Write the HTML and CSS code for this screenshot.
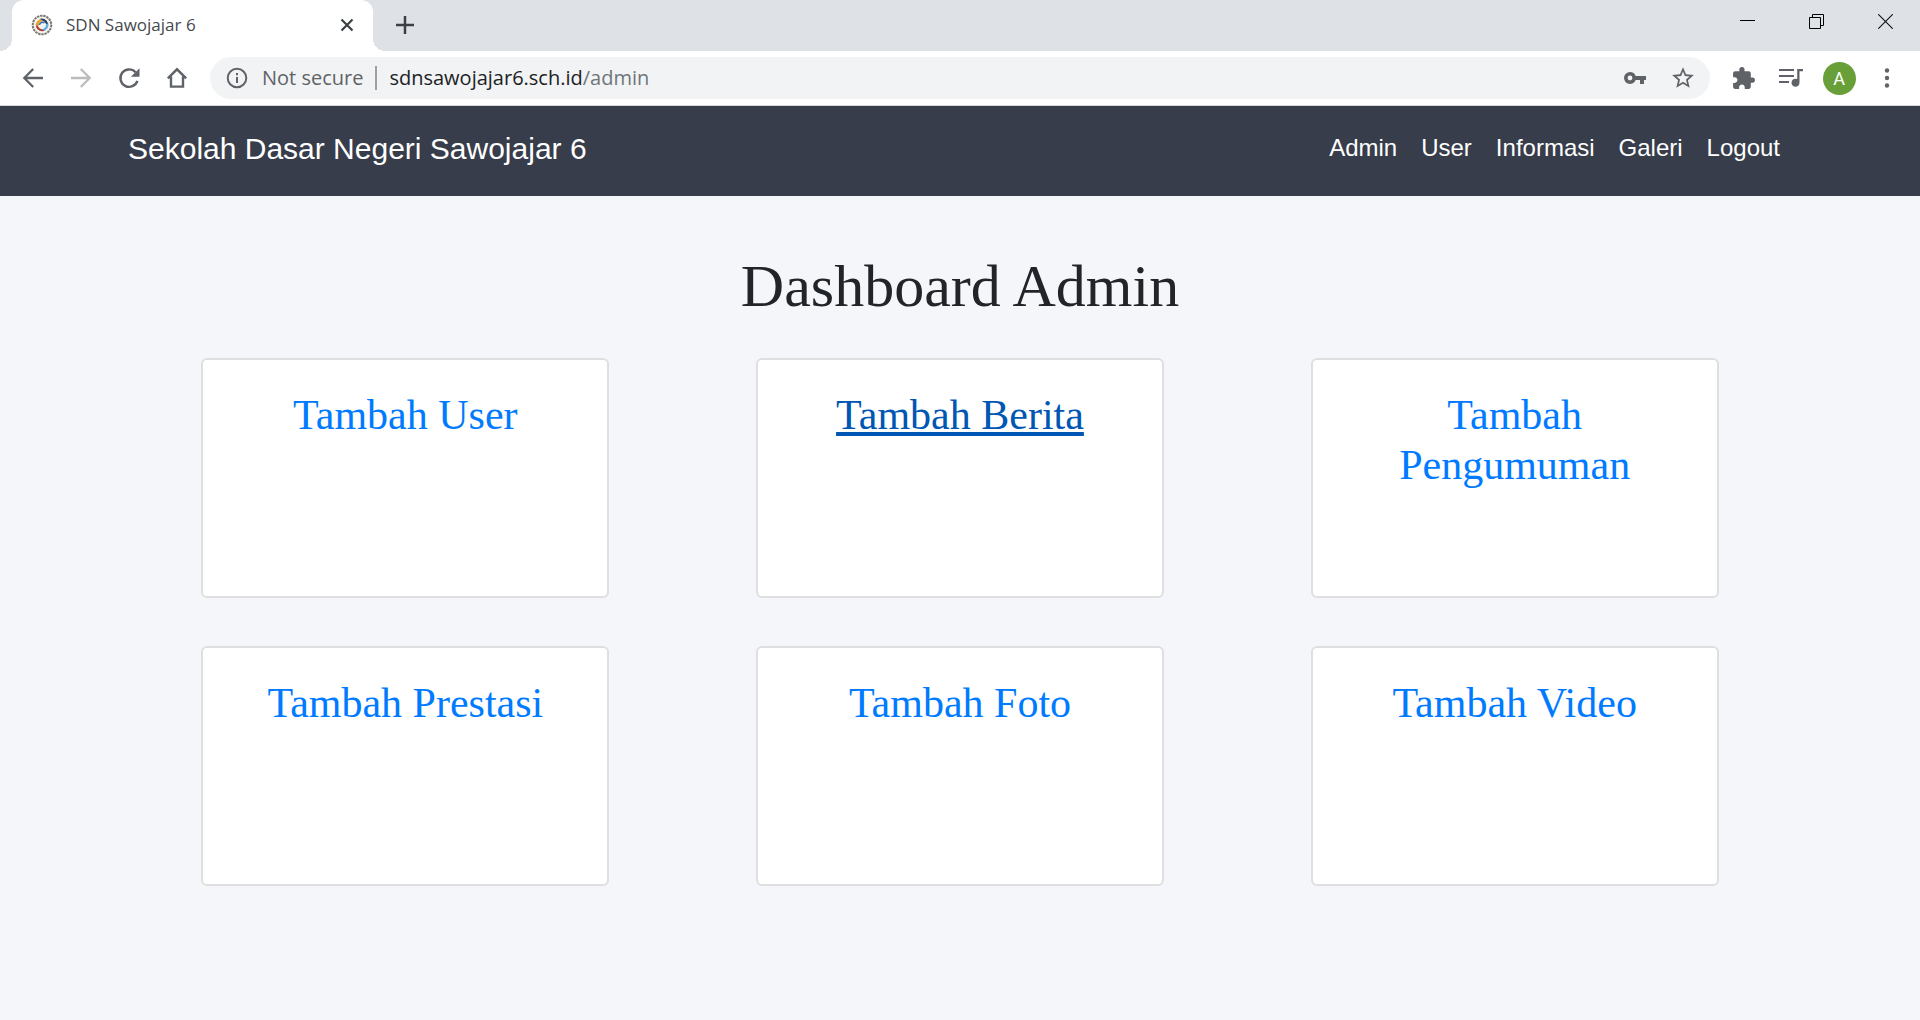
FILE: index.html
```html
<!DOCTYPE html>
<html lang="id">
<head>
<meta charset="utf-8">
<meta name="viewport" content="width=device-width, initial-scale=1">
<title>SDN Sawojajar 6</title>
<link rel="stylesheet" href="styles.css">
</head>
<body>
<div class="tabstrip">
  <div class="tab">
    <svg class="favicon" viewBox="0 0 22 22" width="22" height="22" aria-hidden="true">
      <circle cx="11" cy="11" r="9.3" fill="#f4f3ee" stroke="#77776f" stroke-width="2" stroke-dasharray="2.4 .8"/>
      <path d="M4.500 11.500A6.500 6.500 0 0 1 11 5l3 2.500c-4-1-6.500 1-6 4z" fill="#eca32c"/>
      <path d="M8.500 5A6.500 6.500 0 0 1 17 9.500l-1.500 3c0-4-3-6-7-7.500z" fill="#263c63"/>
      <path d="M17.500 9.500A6.500 6.500 0 0 1 12 17l-3-2c4 .5 6.500-2 6-5z" fill="#62aee0"/>
      <path d="M14 16.500A6.500 6.500 0 0 1 5 13l1-3c1 4 4 5.500 8 6.500z" fill="#b9382c"/>
      <path d="M8.500 11a3 3 0 0 1 5-2" fill="none" stroke="#2c7ab8" stroke-width="1.500"/>
    </svg>
    <span class="tab-title">SDN Sawojajar 6</span>
    <button class="tab-close" type="button" aria-label="Close tab">
      <svg viewBox="0 0 18 18" width="18" height="18"><path d="M3.500 3.500l11 11M14.500 3.500l-11 11" stroke="#3c4043" stroke-width="2.200"/></svg>
    </button>
  </div>
  <button class="new-tab" type="button" aria-label="New tab">
    <svg viewBox="0 0 20 20" width="20" height="20"><path d="M10 1v18M1 10h18" stroke="#3c4043" stroke-width="2.500"/></svg>
  </button>
  <div class="window-controls">
    <button type="button" aria-label="Minimize"><svg viewBox="0 0 15 15" width="15" height="15"><path d="M0 6.500h15" stroke="#000"/></svg></button>
    <button type="button" aria-label="Restore"><svg viewBox="0 0 15 15" width="15" height="15"><path d="M.5 3.500h11v11H.5zM3.500 3.500v-3h11v11h-3" fill="none" stroke="#000"/></svg></button>
    <button type="button" aria-label="Close"><svg viewBox="0 0 15 15" width="15" height="15"><path d="M.3 .3l14.400 14.400M14.700 .3L.3 14.700" stroke="#111" stroke-width="1.100"/></svg></button>
  </div>
</div>

<div class="toolbar">
  <button class="tool" type="button" aria-label="Back">
    <svg viewBox="0 0 30 30" width="30" height="30"><path d="M25 15H6.500M15.200 6L6.300 15l8.900 9" fill="none" stroke="#5f6368" stroke-width="2.300"/></svg>
  </button>
  <button class="tool" type="button" aria-label="Forward">
    <svg viewBox="0 0 30 30" width="30" height="30"><path d="M5 15h18.500M14.800 6l8.900 9-8.900 9" fill="none" stroke="#babcbe" stroke-width="2.300"/></svg>
  </button>
  <button class="tool" type="button" aria-label="Reload">
    <svg viewBox="0 0 30 30" width="30" height="30"><path d="M23.400 17.800A8.700 8.700 0 1 1 21.500 9.200" fill="none" stroke="#5f6368" stroke-width="2.400"/><path d="M25.500 5.200v8.600h-8.600z" fill="#5f6368"/></svg>
  </button>
  <button class="tool" type="button" aria-label="Home">
    <svg viewBox="0 0 30 30" width="30" height="30"><path d="M5.800 15.300L15 6.300l9.200 9M9 13.500v10.100h12V13.500" fill="none" stroke="#5f6368" stroke-width="2.400"/></svg>
  </button>
  <div class="omnibox">
    <svg viewBox="0 0 22 22" width="22" height="22" aria-hidden="true"><circle cx="11" cy="11" r="9.300" fill="none" stroke="#5f6368" stroke-width="2"/><path d="M10 10h2v6h-2zM10 6h2v2.200h-2z" fill="#5f6368"/></svg>
    <span class="security">Not secure</span>
    <div class="url" role="textbox" aria-label="Address" contenteditable="true" spellcheck="false">sdnsawojajar6.sch.id<span class="url-path">/admin</span></div>
    <button class="tool" type="button" aria-label="Saved passwords">
      <svg viewBox="0 0 24 24" width="24" height="24"><path d="M12.650 10A6 6 0 0 0 7 6a6 6 0 1 0 5.650 8H17v4h4v-4h2v-4zM7 14.400a2.400 2.400 0 1 1 0-4.800 2.400 2.400 0 0 1 0 4.800z" fill="#5f6368"/></svg>
    </button>
    <button class="tool" type="button" aria-label="Bookmark this page">
      <svg viewBox="0 0 24 24" width="26" height="26"><path d="M22 9.240l-7.190-.62L12 2 9.190 8.630 2 9.240l5.460 4.730L5.820 21 12 17.270 18.180 21l-1.630-7.030L22 9.240zM12 15.400l-3.760 2.270 1-4.280-3.320-2.880 4.380-.38L12 6.100l1.710 4.040 4.380.38-3.320 2.880 1 4.280L12 15.400z" fill="#5f6368"/></svg>
    </button>
  </div>
  <button class="tool" type="button" aria-label="Extensions">
    <svg viewBox="0 0 24 24" width="25" height="25"><path d="M20.500 11H19V7c0-1.100-.9-2-2-2h-4V3.500a2.500 2.500 0 0 0-5 0V5H4c-1.100 0-1.990.9-1.990 2v3.800H3.500c1.490 0 2.700 1.210 2.700 2.700s-1.210 2.700-2.700 2.700H2V20c0 1.100.9 2 2 2h3.800v-1.500c0-1.490 1.210-2.700 2.700-2.700s2.700 1.210 2.700 2.700V22H17c1.100 0 2-.9 2-2v-4h1.500a2.500 2.500 0 0 0 0-5z" fill="#5f6368"/></svg>
  </button>
  <button class="tool" type="button" aria-label="Media controls">
    <svg viewBox="0 0 26 22" width="26" height="22"><path d="M1 3h15M1 9h15M1 15h10" stroke="#5f6368" stroke-width="2.200"/><path d="M25 1.900v2.300h-3.500v11.300a4 4 0 1 1-2.300-3.400V1.900z" fill="#5f6368"/></svg>
  </button>
  <button class="tool" type="button" aria-label="Account"><span class="avatar">A</span></button>
  <button class="tool" type="button" aria-label="Menu">
    <svg viewBox="0 0 24 24" width="24" height="24"><g fill="#5f6368"><circle cx="12" cy="4.500" r="2.200"/><circle cx="12" cy="12" r="2.200"/><circle cx="12" cy="19.500" r="2.200"/></g></svg>
  </button>
</div>

<nav class="navbar">
  <div class="container navbar-inner">
    <a class="brand" href="#">Sekolah Dasar Negeri Sawojajar 6</a>
    <ul class="nav-links">
      <li><a href="#">Admin</a></li>
      <li><a href="#">User</a></li>
      <li><a href="#">Informasi</a></li>
      <li><a href="#">Galeri</a></li>
      <li><a href="#">Logout</a></li>
    </ul>
  </div>
</nav>

<main class="container">
  <h1 class="page-title">Dashboard Admin</h1>
  <div class="cards">
    <div class="card"><h2><a href="#">Tambah User</a></h2></div>
    <div class="card"><h2><a class="active" href="#">Tambah Berita</a></h2></div>
    <div class="card"><h2><a href="#">Tambah Pengumuman</a></h2></div>
    <div class="card"><h2><a href="#">Tambah Prestasi</a></h2></div>
    <div class="card"><h2><a href="#">Tambah Foto</a></h2></div>
    <div class="card"><h2><a href="#">Tambah Video</a></h2></div>
  </div>
</main>
</body>
</html>
```

FILE: styles.css
```css
* {
  box-sizing: border-box;
}

body {
  margin: 0;
  min-height: 100vh;
  background: #f5f6fa;
  color: #212529;
  font-family: "Liberation Serif", "Times New Roman", serif;
}

button {
  display: flex;
  align-items: center;
  justify-content: center;
  flex: none;
  padding: 0;
  border: 0;
  background: none;
}

svg {
  display: block;
  flex: none;
}

/* Browser frame */
.tabstrip,
.toolbar {
  font-family: "Open Sans", "Noto Sans", sans-serif;
}

.tabstrip {
  display: flex;
  height: 51px;
  padding-left: 12px;
  background: #dee1e6;
}

.tab {
  position: relative;
  display: flex;
  align-items: center;
  width: 361px;
  padding: 0 14px 1px 19px;
  border-radius: 12px 12px 0 0;
  background: #fff;
}

.tab::before,
.tab::after {
  content: "";
  position: absolute;
  bottom: 0;
  width: 12px;
  height: 12px;
}

.tab::before {
  right: 100%;
  background: radial-gradient(circle at 0 0, #dee1e6 12px, #fff 12px);
}

.tab::after {
  left: 100%;
  background: radial-gradient(circle at 100% 0, #dee1e6 12px, #fff 12px);
}

.tab-title {
  flex: 1;
  margin-left: 13px;
  color: #45494d;
  font-size: 17px;
  line-height: 24px;
}

.tab-close {
  width: 24px;
  height: 24px;
}

.new-tab {
  width: 40px;
  height: 50px;
  margin-left: 12px;
}

.window-controls {
  display: flex;
  margin-left: auto;
}

.window-controls button {
  width: 69px;
  height: 43px;
}

.toolbar {
  display: flex;
  align-items: center;
  gap: 6px;
  height: 55px;
  padding: 0 12px;
  border-bottom: 1px solid #d5d7dc;
  background: #fff;
}

.tool {
  width: 42px;
  height: 42px;
}

.omnibox {
  display: flex;
  flex: 1;
  align-items: center;
  gap: 6px;
  height: 42px;
  margin: 0 6px;
  padding: 0 6px 0 16px;
  border-radius: 21px;
  background: #f1f3f4;
  font-size: 20px;
  line-height: 24px;
}

.security {
  margin-left: 8px;
  padding-right: 12px;
  border-right: 2px solid #9aa0a6;
  color: #5f6368;
}

.url {
  flex: 1;
  margin-left: 6px;
  color: #202124;
}

.url-path {
  color: #70757a;
}

.avatar {
  width: 33px;
  border-radius: 50%;
  background: #689f38;
  color: #fff;
  font-family: Roboto, sans-serif;
  font-size: 18px;
  line-height: 33px;
}

/* Site */
a {
  color: #007bff;
  text-decoration: none;
}

.container {
  max-width: 1710px;
  margin: 0 auto;
  padding: 0 23px;
}

.navbar {
  height: 90px;
  padding-top: 12px;
  background: #373d4a;
  font-family: "Liberation Sans", Arial, sans-serif;
}

.navbar a {
  color: #fff;
}

.navbar-inner {
  display: flex;
  align-items: flex-start;
  justify-content: space-between;
}

.brand {
  padding: 8px 0;
  font-size: 30px;
  line-height: 45px;
}

.nav-links {
  display: flex;
  margin: 0;
  padding: 0;
  list-style: none;
}

.nav-links a {
  display: block;
  padding: 12px;
  font-size: 24px;
  line-height: 36px;
}

.page-title {
  margin: 54px 0 36px;
  font-size: 60px;
  font-weight: 400;
  line-height: 72px;
  text-align: center;
}

.cards {
  display: grid;
  grid-template-columns: repeat(3, 1fr);
  row-gap: 48px;
  justify-items: center;
}

.card {
  width: 100%;
  max-width: 408px;
  min-height: 240px;
  padding: 30px;
  border: 2px solid #dfdfdf;
  border-radius: 6px;
  background: #fff;
  text-align: center;
}

.card h2 {
  margin: 0;
  font-size: 42px;
  font-weight: 400;
  line-height: 50px;
}

.card .active {
  color: #0056b3;
  text-decoration: underline 4px;
  text-underline-offset: 3px;
}
```
